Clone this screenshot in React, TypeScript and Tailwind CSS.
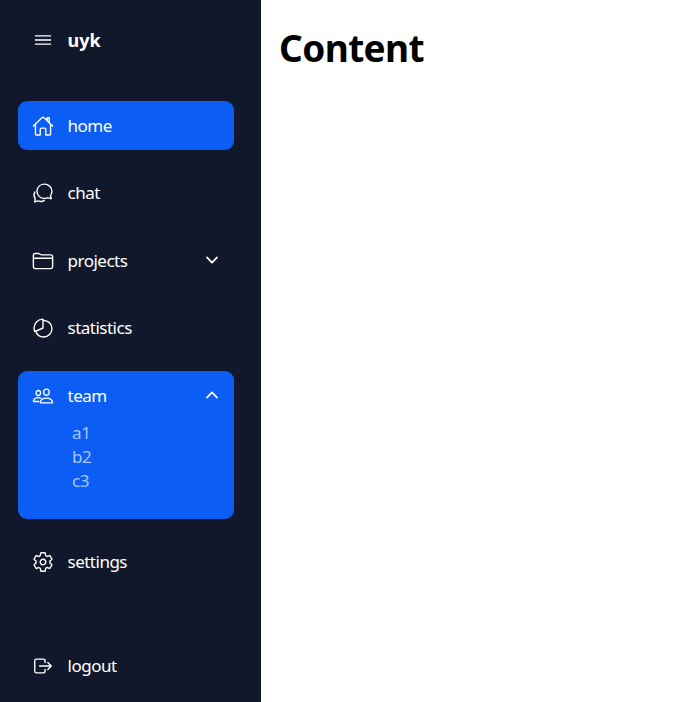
import {
  IoChatbubblesOutline,
  IoChevronDown,
  IoChevronUp,
  IoFolderOutline,
  IoHomeOutline,
  IoLogOutOutline,
  IoMenuOutline,
  IoPeopleOutline,
  IoPieChartOutline,
  IoSettingsOutline,
} from "react-icons/io5";
import type { IconType } from "react-icons";

type ItemProps = {
  icon: IconType;
  label: string;
  className?: string;
  chevron?: "up" | "down";
  children?: string[];
};

function Item({ icon: Icon, label, className = "", chevron, children }: ItemProps) {
  const Chevron = chevron === "up" ? IoChevronUp : IoChevronDown;
  return (
    <li className={`rounded-[9px] ${className}`}>
      <a className="flex h-[49px] items-center pl-3.5 pr-[13px]">
        <Icon className="size-[22px] shrink-0" />
        <span className="ml-[13.5px] leading-6 tracking-[-0.5px]">{label}</span>
        {chevron && <Chevron className="mb-0.5 ml-auto size-[18px]" />}
      </a>
      {children && (
        <ul className="pl-[54px] pt-px tracking-[-0.4px] text-[#a9c5fb]">
          {children.map((name) => (
            <li key={name} className="h-6 leading-6">{name}</li>
          ))}
        </ul>
      )}
    </li>
  );
}

export default function App() {
  return (
    <div className="flex h-[702px] bg-white font-['Noto_Sans','Open_Sans',sans-serif] text-[17px]">
      <nav className="w-[261px] shrink-0 bg-[#12182b] pl-[18px] pr-[27px] text-white">
        <header className="flex h-[101px] items-start pl-3.5 pt-[29px]">
          <IoMenuOutline className="size-[22px]" />
          <strong className="-mt-px ml-[13.5px] text-lg leading-6">uyk</strong>
        </header>
        <ul className="flex flex-col">
          <Item icon={IoHomeOutline} label="home" className="h-[49px] bg-[#0c5df4]" />
          <Item icon={IoChatbubblesOutline} label="chat" className="mt-[18px] h-[49px]" />
          <Item icon={IoFolderOutline} label="projects" className="mt-[19px] h-[49px]" chevron="down" />
          <Item icon={IoPieChartOutline} label="statistics" className="mt-[18px] h-[49px]" />
          <Item icon={IoPeopleOutline} label="team" className="mt-[19px] h-[148px] bg-[#0c5df4]" chevron="up">
            {["a1", "b2", "c3"]}
          </Item>
          <Item icon={IoSettingsOutline} label="settings" className="mt-[18px] h-[49px]" />
          <Item icon={IoLogOutOutline} label="logout" className="mt-[55px] h-[49px]" />
        </ul>
      </nav>
      <main className="pl-[18px] pt-[22px] text-black">
        <h1 className="text-[37px] font-bold leading-[52px] tracking-[-0.6px]">Content</h1>
      </main>
    </div>
  );
}
